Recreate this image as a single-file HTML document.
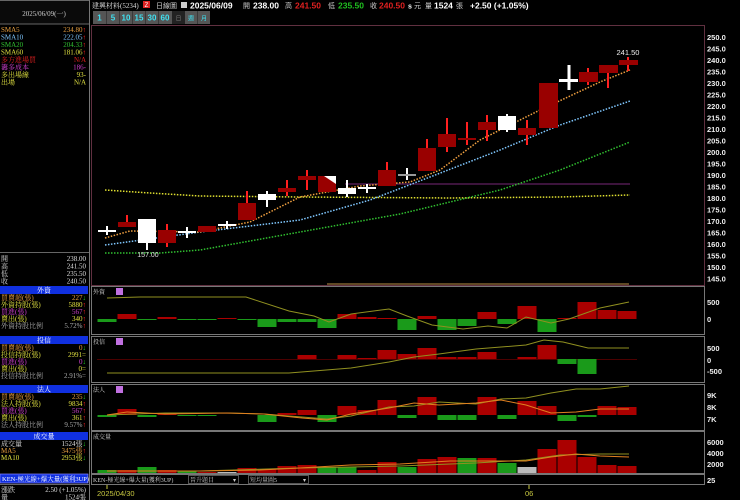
<!DOCTYPE html>
<html><head><meta charset="utf-8"><style>
html,body{margin:0;padding:0;background:#000;}
svg{display:block;font-family:"Liberation Sans","Noto Sans CJK TC",sans-serif;}
.s{font-size:7px;}
</style></head><body>
<svg width="740" height="500" viewBox="0 0 740 500" xmlns="http://www.w3.org/2000/svg">
<rect width="740" height="500" fill="#000"/>
<rect x="0" y="0" width="89" height="24" fill="#0a0a0a"/>
<line x1="0" y1="0.5" x2="89" y2="0.5" stroke="#666"/>
<line x1="0" y1="24" x2="89" y2="24" stroke="#666"/>
<line x1="89.5" y1="0" x2="89.5" y2="500" stroke="#777"/>
<text x="44" y="16" fill="#ccc" font-size="7" text-anchor="middle" font-family="Liberation Serif,Noto Serif CJK SC,serif">2025/06/09(一)</text>
<g class="s" font-family="Liberation Serif,Noto Serif CJK SC,serif">
<text x="1" y="32" fill="#e8a040">SMA5</text><text x="86" y="32" fill="#e8a040" text-anchor="end">234.80<tspan fill="#f22">↑</tspan></text>
<text x="1" y="39.5" fill="#80c8ff">SMA10</text><text x="86" y="39.5" fill="#80c8ff" text-anchor="end">222.05<tspan fill="#f22">↑</tspan></text>
<text x="1" y="47" fill="#30c030">SMA20</text><text x="86" y="47" fill="#30c030" text-anchor="end">204.33<tspan fill="#f22">↑</tspan></text>
<text x="1" y="54.5" fill="#e0e040">SMA60</text><text x="86" y="54.5" fill="#e0e040" text-anchor="end">181.06<tspan fill="#f22">↑</tspan></text>
<text x="1" y="62" fill="#e02020">多方進場買</text><text x="86" y="62" fill="#e02020" text-anchor="end">N/A</text>
<text x="1" y="69.5" fill="#d040d0">籌多成本</text><text x="86" y="69.5" fill="#d040d0" text-anchor="end">186-</text>
<text x="1" y="77" fill="#e0e040">多出場線</text><text x="86" y="77" fill="#e0e040" text-anchor="end">93-</text>
<text x="1" y="84.5" fill="#e0e040">出場</text><text x="86" y="84.5" fill="#e0e040" text-anchor="end">N/A</text>
</g>
<line x1="0" y1="252.5" x2="89" y2="252.5" stroke="#666"/>
<g class="s" fill="#ddd" font-family="Liberation Serif,Noto Serif CJK SC,serif">
<text x="1" y="261">開</text><text x="86" y="261" text-anchor="end">238.00</text>
<text x="1" y="268.5">高</text><text x="86" y="268.5" text-anchor="end">241.50</text>
<text x="1" y="276">低</text><text x="86" y="276" text-anchor="end">235.50</text>
<text x="1" y="283.5">收</text><text x="86" y="283.5" text-anchor="end">240.50</text>
</g>
<g class="s" font-family="Liberation Serif,Noto Serif CJK SC,serif">
<rect x="0" y="286" width="88" height="8" fill="#1030e0"/><text x="44" y="292.5" fill="#fff" text-anchor="middle">外資</text>
<text x="1" y="300" fill="#e8a040">買賣超(張)</text><text x="86" y="300" fill="#e8a040" text-anchor="end">227<tspan fill="#2c2">↓</tspan></text>
<text x="1" y="307" fill="#e0e040">外資持股(張)</text><text x="86" y="307" fill="#e0e040" text-anchor="end">5880<tspan fill="#f22">↑</tspan></text>
<text x="1" y="314" fill="#d040d0">買進(張)</text><text x="86" y="314" fill="#d040d0" text-anchor="end">567<tspan fill="#f22">↑</tspan></text>
<text x="1" y="321" fill="#e0e040">賣出(張)</text><text x="86" y="321" fill="#e0e040" text-anchor="end">340<tspan fill="#f22">↑</tspan></text>
<text x="1" y="328" fill="#aaa">外資持股比例</text><text x="86" y="328" fill="#aaa" text-anchor="end">5.72%<tspan fill="#f22">↑</tspan></text>
<rect x="0" y="336" width="88" height="8" fill="#1030e0"/><text x="44" y="342.5" fill="#fff" text-anchor="middle">投信</text>
<text x="1" y="350" fill="#e8a040">買賣超(張)</text><text x="86" y="350" fill="#e8a040" text-anchor="end">0<tspan fill="#2c2">↓</tspan></text>
<text x="1" y="357" fill="#e0e040">投信持股(張)</text><text x="86" y="357" fill="#e0e040" text-anchor="end">2991=</text>
<text x="1" y="364" fill="#d040d0">買進(張)</text><text x="86" y="364" fill="#d040d0" text-anchor="end">0<tspan fill="#2c2">↓</tspan></text>
<text x="1" y="371" fill="#e0e040">賣出(張)</text><text x="86" y="371" fill="#e0e040" text-anchor="end">0=</text>
<text x="1" y="378" fill="#aaa">投信持股比例</text><text x="86" y="378" fill="#aaa" text-anchor="end">2.91%=</text>
<rect x="0" y="385" width="88" height="8" fill="#1030e0"/><text x="44" y="391.5" fill="#fff" text-anchor="middle">法人</text>
<text x="1" y="399" fill="#e8a040">買賣超(張)</text><text x="86" y="399" fill="#e8a040" text-anchor="end">235<tspan fill="#2c2">↓</tspan></text>
<text x="1" y="406" fill="#e0e040">法人持股(張)</text><text x="86" y="406" fill="#e0e040" text-anchor="end">9834<tspan fill="#f22">↑</tspan></text>
<text x="1" y="413" fill="#d040d0">買進(張)</text><text x="86" y="413" fill="#d040d0" text-anchor="end">567<tspan fill="#f22">↑</tspan></text>
<text x="1" y="420" fill="#e0e040">賣出(張)</text><text x="86" y="420" fill="#e0e040" text-anchor="end">361<tspan fill="#f22">↑</tspan></text>
<text x="1" y="427" fill="#aaa">法人持股比例</text><text x="86" y="427" fill="#aaa" text-anchor="end">9.57%<tspan fill="#f22">↑</tspan></text>
<rect x="0" y="432" width="88" height="8" fill="#1030e0"/><text x="44" y="438.5" fill="#fff" text-anchor="middle">成交量</text>
<text x="1" y="446" fill="#ddd">成交量</text><text x="86" y="446" fill="#ddd" text-anchor="end">1524張<tspan fill="#2c2">↓</tspan></text>
<text x="1" y="453" fill="#e8a040">MA5</text><text x="86" y="453" fill="#e8a040" text-anchor="end">3475張<tspan fill="#f22">↑</tspan></text>
<text x="1" y="460" fill="#e0e040">MA10</text><text x="86" y="460" fill="#e0e040" text-anchor="end">2953張<tspan fill="#2c2">↓</tspan></text>
<rect x="0" y="474" width="88" height="9" fill="#1030e0" stroke="#88f" stroke-width="0.7"/><text x="2" y="481" fill="#fff" font-size="6.5">KEN-極光線+爆大量(獲利3UP)</text>
<line x1="0" y1="484.5" x2="89" y2="484.5" stroke="#666"/>
<text x="1" y="492" fill="#ddd">漲跌</text><text x="86" y="492" fill="#ddd" text-anchor="end">2.50 (+1.05%)</text>
<text x="1" y="499.5" fill="#ddd">量</text><text x="86" y="499.5" fill="#ddd" text-anchor="end">1524張</text>
</g>
<g font-size="7.5">
<text x="92" y="8" fill="#ddd" font-size="7" font-family="Liberation Serif,Noto Serif CJK SC,serif">建興材料(5234)</text>
<rect x="143" y="1" width="7" height="7" fill="#d22"/><text x="146.5" y="7.2" fill="#fff" font-size="6" text-anchor="middle">Z</text>
<text x="156" y="8" fill="#ccc" font-size="7">日線圖</text>
<rect x="181" y="2" width="6" height="6" fill="#ccc"/>
<text x="190" y="8.5" fill="#fff" font-weight="bold" font-size="8.5">2025/06/09</text>
<text x="243" y="8" fill="#ccc" font-size="7">開</text><text x="253" y="8.5" fill="#fff" font-weight="bold" font-size="8.5">238.00</text>
<text x="285" y="8" fill="#ccc" font-size="7">高</text><text x="295" y="8.5" fill="#e02020" font-weight="bold" font-size="8.5">241.50</text>
<text x="328" y="8" fill="#ccc" font-size="7">低</text><text x="338" y="8.5" fill="#20c020" font-weight="bold" font-size="8.5">235.50</text>
<text x="370" y="8" fill="#ccc" font-size="7">收</text><text x="379" y="8.5" fill="#e02020" font-weight="bold" font-size="8.5">240.50</text>
<text x="408" y="8.5" fill="#fff" font-weight="bold" font-size="7">s</text><text x="414" y="8" fill="#ccc" font-size="7">元</text>
<text x="425" y="8" fill="#ccc" font-size="7">量</text><text x="434" y="8.5" fill="#fff" font-weight="bold" font-size="8.5">1524</text><text x="456" y="8" fill="#ccc" font-size="7">張</text>
<text x="470" y="8.5" fill="#fff" font-weight="bold" font-size="8.5">+2.50 (+1.05%)</text>
</g>
<g font-size="8" font-weight="bold" text-anchor="middle">
<rect x="93" y="11" width="117" height="13" fill="#555"/>
<rect x="172" y="11" width="13" height="13" fill="#222"/>
<g stroke="#333" stroke-width="0.8"><line x1="106.5" y1="11" x2="106.5" y2="24"/><line x1="119.5" y1="11" x2="119.5" y2="24"/><line x1="132.5" y1="11" x2="132.5" y2="24"/><line x1="145.5" y1="11" x2="145.5" y2="24"/><line x1="158.5" y1="11" x2="158.5" y2="24"/><line x1="197.5" y1="11" x2="197.5" y2="24"/></g>
<text x="99.5" y="20.5" fill="#40e0f0">1</text><text x="113" y="20.5" fill="#40e0f0">5</text><text x="126" y="20.5" fill="#40e0f0">10</text><text x="139" y="20.5" fill="#40e0f0">15</text><text x="152" y="20.5" fill="#40e0f0">30</text><text x="165" y="20.5" fill="#40e0f0">60</text>
<text x="178.5" y="20.5" fill="#777" font-size="6" font-weight="normal">日</text><text x="191" y="20.5" fill="#40e0f0" font-size="6" font-weight="normal">週</text><text x="204" y="20.5" fill="#40e0f0" font-size="6" font-weight="normal">月</text>
</g>
<rect x="91.5" y="25.5" width="613" height="260" fill="none" stroke="#603040"/>
<g fill="#eee" font-size="7.5" font-weight="bold">
<text x="707" y="40">250.0</text><text x="707" y="51.5">245.0</text><text x="707" y="63">240.0</text><text x="707" y="74.5">235.0</text><text x="707" y="86">230.0</text><text x="707" y="97.5">225.0</text><text x="707" y="109">220.0</text><text x="707" y="120.5">215.0</text><text x="707" y="132">210.0</text><text x="707" y="143.5">205.0</text><text x="707" y="155">200.0</text><text x="707" y="166.5">195.0</text><text x="707" y="178">190.0</text><text x="707" y="189.5">185.0</text><text x="707" y="201">180.0</text><text x="707" y="212.5">175.0</text><text x="707" y="224">170.0</text><text x="707" y="235.5">165.0</text><text x="707" y="247">160.0</text><text x="707" y="258.5">155.0</text><text x="707" y="270">150.0</text><text x="707" y="281.5">145.0</text>
</g>
<g fill="none" stroke-width="1.5" stroke-dasharray="1.5 1.5">
<polyline stroke="#e0e030" points="105,190 150,193 200,196 300,197 450,198 560,197 630,195"/>
<line x1="345" y1="184" x2="630" y2="184" stroke="#602060" stroke-dasharray="none" stroke-width="1.2"/>
<polyline stroke="#30c030" points="105,253 160,253 200,250 300,232 400,214 500,190 560,170 630,142"/>
<polyline stroke="#80c8ff" points="105,245 200,232 300,220 370,200 430,177 500,150 560,125 630,101"/>
<polyline stroke="#f0a040" points="105,238 130,231 200,232 250,222 300,197 360,186 410,182 440,170 480,140 540,110 600,82 630,70"/>
</g>
<g stroke-width="2">
<g stroke="#fff" fill="#fff">
<line x1="107" y1="226" x2="107" y2="235"/><rect x="98" y="230" width="18" height="2" stroke="none"/>
<line x1="147" y1="219" x2="147" y2="250"/><rect x="138" y="219" width="18" height="24" stroke="none"/>
<line x1="187" y1="227" x2="187" y2="238"/><rect x="178" y="231" width="18" height="2" stroke="none"/>
<line x1="227" y1="221" x2="227" y2="229"/><rect x="218" y="224" width="18" height="2" stroke="none"/>
<line x1="267" y1="191" x2="267" y2="207"/><rect x="258" y="194" width="18" height="6" stroke="none"/>
<line x1="347" y1="180" x2="347" y2="197"/><rect x="338" y="188" width="18" height="6" stroke="none"/>
<line x1="367" y1="184" x2="367" y2="193"/><rect x="358" y="187" width="18" height="2" stroke="none"/>
<line x1="407" y1="168" x2="407" y2="180"/><rect x="398" y="174" width="18" height="2" fill="#999" stroke="none"/>
<line x1="507" y1="114" x2="507" y2="132"/><rect x="498" y="116" width="18" height="14" stroke="none"/>
<line x1="569" y1="65" x2="569" y2="90" stroke-width="3"/><rect x="559" y="79" width="19" height="3" stroke="none"/>
</g>
<g stroke="#ff2020" fill="#900">
<line x1="127" y1="215" x2="127" y2="227"/><rect x="118" y="222" width="18" height="5" stroke="none"/>
<line x1="167" y1="224" x2="167" y2="247"/><rect x="158" y="230" width="18" height="13" stroke="none"/>
<rect x="198" y="226" width="18" height="6" stroke="none"/>
<line x1="247" y1="191" x2="247" y2="220"/><rect x="238" y="203" width="18" height="17" stroke="none"/>
<line x1="287" y1="180" x2="287" y2="196"/><rect x="278" y="188" width="18" height="4" stroke="none"/>
<line x1="307" y1="170" x2="307" y2="190"/><rect x="298" y="176" width="18" height="4" stroke="none"/>
<rect x="318" y="176" width="18" height="16" stroke="none"/>
<line x1="387" y1="162" x2="387" y2="186"/><rect x="378" y="170" width="18" height="16" stroke="none"/>
<line x1="427" y1="139" x2="427" y2="171"/><rect x="418" y="148" width="18" height="23" stroke="none"/>
<line x1="447" y1="118" x2="447" y2="152"/><rect x="438" y="134" width="18" height="13" stroke="none"/>
<line x1="467" y1="122" x2="467" y2="145"/><rect x="458" y="138" width="18" height="2" stroke="none"/>
<line x1="487" y1="115" x2="487" y2="141"/><rect x="478" y="122" width="18" height="8" stroke="none"/>
<line x1="527" y1="120" x2="527" y2="145"/><rect x="518" y="128" width="18" height="7" stroke="none"/>
<rect x="539" y="83" width="19" height="45" stroke="none"/>
<line x1="588" y1="68" x2="588" y2="85"/><rect x="579" y="72" width="19" height="10" stroke="none"/>
<line x1="608" y1="65" x2="608" y2="88"/><rect x="599" y="65" width="19" height="8" stroke="none"/>
<line x1="628" y1="57" x2="628" y2="71"/><rect x="619" y="60" width="19" height="5" stroke="none"/>
</g>
<polygon points="324,176 336,176 336,184" fill="#fff"/>
</g>
<text x="628" y="55" fill="#eee" font-size="7.5" text-anchor="middle">241.50</text>
<text x="148" y="257" fill="#ddd" font-size="7" text-anchor="middle">157.00</text>
<line x1="327" y1="284" x2="629" y2="284" stroke="#806030" stroke-width="1.5"/>
<g fill="none" stroke="#777">
<rect x="91.5" y="286.5" width="613" height="48"/>
<rect x="91.5" y="336.5" width="613" height="46"/>
<rect x="91.5" y="384.5" width="613" height="46"/>
<rect x="91.5" y="431.5" width="613" height="42"/>
<rect x="91.5" y="474.5" width="613" height="10"/>
</g>
<g fill="#ddd" font-size="6" font-family="Liberation Serif,Noto Serif CJK SC,serif">
<text x="93" y="294">外資</text><text x="93" y="344">投信</text><text x="93" y="392">法人</text><text x="93" y="439">成交量</text>
</g>
<g fill="#c070e0"><rect x="116" y="288" width="7" height="7"/><rect x="116" y="338" width="7" height="7"/><rect x="116" y="386" width="7" height="7"/></g>
<g fill="#eee" font-size="7.5" font-weight="bold">
<text x="707" y="305">500</text><text x="707" y="322">0</text>
<text x="707" y="351">500</text><text x="707" y="363">0</text><text x="707" y="374">-500</text>
<text x="707" y="398">9K</text><text x="707" y="410">8K</text><text x="707" y="422">7K</text>
<text x="707" y="445">6000</text><text x="707" y="456">4000</text><text x="707" y="467">2000</text>
<text x="707" y="483">25</text>
</g>
<g fill="#1a9a1a">
<rect x="97.5" y="319" width="19" height="3"/><rect x="137.5" y="319" width="19" height="1"/><rect x="177.5" y="319" width="19" height="1"/><rect x="197.5" y="319" width="19" height="1"/><rect x="237.5" y="319" width="19" height="1"/>
<rect x="257.5" y="319" width="19" height="8"/><rect x="277.5" y="319" width="19" height="3"/><rect x="297.5" y="319" width="19" height="3"/><rect x="317.5" y="319" width="19" height="9"/><rect x="397.5" y="319" width="19" height="11"/><rect x="437.5" y="319" width="19" height="11"/><rect x="457.5" y="319" width="19" height="7"/><rect x="497.5" y="319" width="19" height="5"/><rect x="537.5" y="319" width="19" height="13"/>
</g>
<g fill="#a00">
<rect x="117.5" y="314" width="19" height="5"/><rect x="157.5" y="317" width="19" height="2"/><rect x="217.5" y="318" width="19" height="1"/><rect x="337.5" y="314" width="19" height="5"/><rect x="357.5" y="317" width="19" height="2"/><rect x="377.5" y="318" width="19" height="1"/><rect x="417.5" y="316" width="19" height="3"/><rect x="477.5" y="312" width="19" height="7"/><rect x="517.5" y="306" width="19" height="13"/><rect x="557.5" y="318" width="19" height="1"/><rect x="577.5" y="302" width="19" height="17"/><rect x="597.5" y="310" width="19" height="9"/><rect x="617.5" y="311" width="19" height="8"/>
</g>
<polyline fill="none" stroke="#909020" stroke-width="1" points="107,298 140,297 246,297 289,311 314,316 329,322 351,314 389,309 407,316 432,325 463,329 488,326 507,328 526,317 551,323 569,319 600,308 629,302"/>
<line x1="97" y1="359.5" x2="637" y2="359.5" stroke="#600" stroke-width="0.8"/>
<g fill="#a00">
<rect x="297.5" y="355" width="19" height="4"/><rect x="337.5" y="355" width="19" height="4"/><rect x="357.5" y="358" width="19" height="1"/><rect x="377.5" y="350" width="19" height="9"/><rect x="397.5" y="354" width="19" height="5"/><rect x="417.5" y="348" width="19" height="11"/><rect x="437.5" y="357" width="19" height="2"/><rect x="457.5" y="357" width="19" height="2"/><rect x="477.5" y="352" width="19" height="7"/><rect x="517.5" y="357" width="19" height="2"/><rect x="537.5" y="345" width="19" height="14"/>
</g>
<g fill="#1a9a1a"><rect x="557.5" y="359" width="19" height="5"/><rect x="577.5" y="359" width="19" height="15"/></g>
<polyline fill="none" stroke="#909020" stroke-width="1" points="107,373 289,373 351,368 389,362 414,357 439,354 476,349 501,347 526,345 544,340 563,342 588,348 629,348"/>
<g fill="#1a9a1a">
<rect x="97.5" y="415" width="19" height="2"/><rect x="137.5" y="415" width="19" height="2"/><rect x="177.5" y="415" width="19" height="1"/><rect x="197.5" y="415" width="19" height="1"/><rect x="257.5" y="415" width="19" height="7"/><rect x="317.5" y="415" width="19" height="7"/><rect x="397.5" y="415" width="19" height="3"/><rect x="437.5" y="415" width="19" height="5"/><rect x="457.5" y="415" width="19" height="5"/><rect x="497.5" y="415" width="19" height="4"/><rect x="557.5" y="415" width="19" height="6"/><rect x="577.5" y="415" width="19" height="2"/>
</g>
<g fill="#a00">
<rect x="117.5" y="409" width="19" height="6"/><rect x="157.5" y="413" width="19" height="2"/><rect x="277.5" y="413" width="19" height="2"/><rect x="297.5" y="410" width="19" height="5"/><rect x="337.5" y="406" width="19" height="9"/><rect x="357.5" y="410" width="19" height="5"/><rect x="377.5" y="400" width="19" height="15"/><rect x="417.5" y="397" width="19" height="18"/><rect x="477.5" y="397" width="19" height="18"/><rect x="517.5" y="401" width="19" height="14"/><rect x="537.5" y="406" width="19" height="9"/><rect x="597.5" y="406" width="19" height="9"/><rect x="617.5" y="407" width="19" height="8"/>
</g>
<polyline fill="none" stroke="#909020" stroke-width="1" points="107,415 165,413 227,413 264,414 302,417 327,419 351,416 389,407 414,406 439,402 476,404 501,399 526,398 551,393 576,389 600,389 629,386"/>
<polyline fill="none" stroke="#e08020" stroke-width="1" points="107,415 127,412 165,414 227,413 264,414 302,418 327,420 351,414 389,408 414,403 439,405 476,403 501,400 526,405 551,413 576,412 600,409 629,409"/>
<g fill="#1a9a1a">
<rect x="97.5" y="470" width="19" height="3"/><rect x="137.5" y="467" width="19" height="6"/><rect x="177.5" y="471" width="19" height="2"/><rect x="317.5" y="467" width="19" height="6"/><rect x="337.5" y="467" width="19" height="6"/><rect x="397.5" y="467" width="19" height="6"/><rect x="457.5" y="458" width="19" height="15"/><rect x="497.5" y="463" width="19" height="10"/>
</g>
<g fill="#a00">
<rect x="117.5" y="470" width="19" height="3"/><rect x="157.5" y="470" width="19" height="3"/><rect x="197.5" y="472" width="19" height="1"/><rect x="237.5" y="468" width="19" height="5"/><rect x="257.5" y="469" width="19" height="4"/><rect x="277.5" y="466" width="19" height="7"/><rect x="297.5" y="465" width="19" height="8"/><rect x="357.5" y="470" width="19" height="3"/><rect x="377.5" y="462" width="19" height="11"/><rect x="417.5" y="459" width="19" height="14"/><rect x="437.5" y="457" width="19" height="16"/><rect x="477.5" y="458" width="19" height="15"/><rect x="537.5" y="449" width="19" height="24"/><rect x="557.5" y="440" width="19" height="33"/><rect x="577.5" y="457" width="19" height="16"/><rect x="597.5" y="465" width="19" height="8"/><rect x="617.5" y="466" width="19" height="7"/>
</g>
<g fill="#bbb"><rect x="217.5" y="472" width="19" height="1"/><rect x="517.5" y="467" width="19" height="6"/></g>
<polyline fill="none" stroke="#909020" stroke-width="1" points="107,471 200,471 300,468 400,466 476,463 526,460 560,455 600,454 629,454"/>
<polyline fill="none" stroke="#e08020" stroke-width="1" points="107,471 200,471 260,470 300,468 350,465 400,464 450,461 501,461 526,461 551,457 576,454 600,456 629,457"/>
<g font-size="6" fill="#ccc" font-family="Liberation Serif,Noto Serif CJK SC,serif">
<text x="93" y="482">KEN-極光線+爆大量(獲利3UP)</text>
<rect x="188.5" y="475.5" width="50" height="8" fill="none" stroke="#555"/><text x="190" y="482">晉升題目</text><text x="236" y="482" text-anchor="end">▾</text>
<rect x="248.5" y="475.5" width="60" height="8" fill="none" stroke="#555"/><text x="250" y="482">短均量圖5</text><text x="306" y="482" text-anchor="end">▾</text>
</g>
<line x1="107" y1="485" x2="107" y2="489" stroke="#cc4"/>
<line x1="529" y1="485" x2="529" y2="489" stroke="#cc4"/>
<text x="97" y="496" fill="#c8c840" font-size="7.5">2025/04/30</text>
<text x="525" y="496" fill="#c8c840" font-size="7.5">06</text>
</svg>
</body></html>
